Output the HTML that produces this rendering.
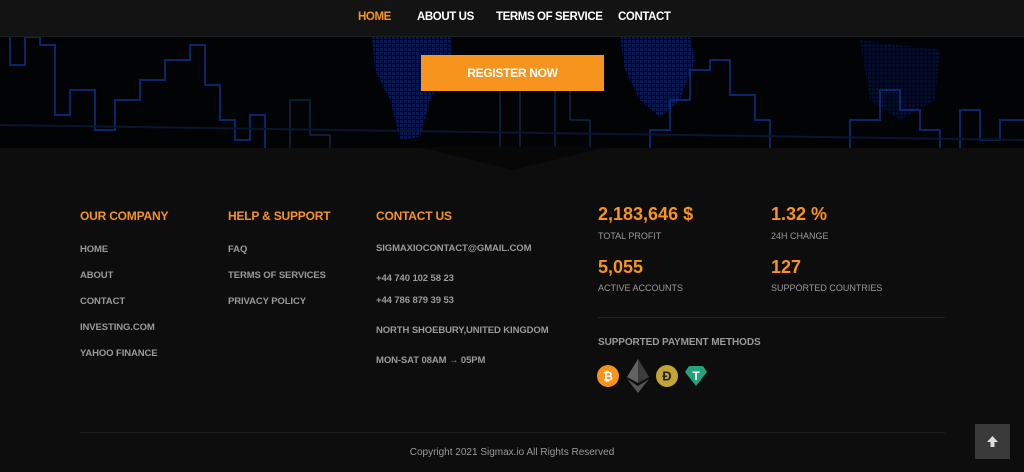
<!DOCTYPE html>
<html><head><meta charset="utf-8"><style>
*{margin:0;padding:0;box-sizing:border-box}
body{width:1024px;height:472px;background:#0d0d0d;font-family:"Liberation Sans",sans-serif;position:relative;overflow:hidden}
.nav{position:absolute;top:0;left:0;width:1024px;height:37px;background:#131313;border-bottom:1px solid #1c1c1c;z-index:3}
.nav a{position:absolute;top:11px;font-size:11.5px;font-weight:bold;color:#fff;text-decoration:none;letter-spacing:-0.4px;white-space:nowrap}
.hero{position:absolute;top:37px;left:0;width:1024px;height:111px;background:#020305;overflow:hidden}
.chev{position:absolute;top:147px;left:0}
.btn{position:absolute;left:421px;top:55px;width:183px;height:36px;background:#f7941d;color:#fff;font-size:12px;font-weight:bold;text-align:center;line-height:36px;z-index:2;letter-spacing:-0.3px}
.t{position:absolute;font-size:9.5px;font-weight:bold;color:#9a9a9a;white-space:nowrap;letter-spacing:-0.1px}
.h{position:absolute;font-size:12px;font-weight:bold;color:#f7941d;white-space:nowrap;letter-spacing:-0.2px}
.big{position:absolute;font-size:18px;font-weight:bold;color:#f7941d}
.s{position:absolute;font-size:9px;color:#9a9a9a;white-space:nowrap}
</style></head><body>
<div class="nav">
<a style="left:358px;color:#f7941d">HOME</a>
<a style="left:417px">ABOUT US</a>
<a style="left:496px">TERMS OF SERVICE</a>
<a style="left:618px">CONTACT</a>
</div>
<div class="hero">
<svg width="1024" height="111" viewBox="0 37 1024 111">
<defs><pattern id="d" width="4" height="4" patternUnits="userSpaceOnUse"><rect width="3" height="3" fill="#0b1f6e"/></pattern></defs>
<g fill="url(#d)" opacity="0.7">
<polygon points="372,37 452,37 450,70 430,100 420,137 400,140 390,100 375,70"/>
<polygon points="620,37 690,37 695,60 680,100 660,117 640,100 625,70"/>
<polygon points="860,40 940,50 935,100 900,120 870,100" opacity=".5"/>
</g>
<g fill="none" stroke="#0b2f85" stroke-width="2" opacity="0.8">
<polyline points="10,37 10,65 25,65 25,37 40,37 40,45 55,45 55,115 70,115 70,90 95,90 95,130 115,130 115,100 140,100 140,80 165,80 165,60 190,60 190,45 205,45 205,85 220,85 220,120 235,120 235,140 250,140 250,115 265,115 265,148"/>
<polyline points="650,148 650,130 670,130 670,100 690,100 690,70 710,70 710,60 730,60 730,95 755,95 755,120 770,120 770,148"/>
<polyline points="850,148 850,120 880,120 880,90 900,90 900,110 920,110 920,130 940,130 940,148"/>
<polyline points="960,148 960,110 980,110 980,140 1000,140 1000,120 1024,120"/>
</g>
<g fill="none" stroke="#12304f" stroke-width="1.5" opacity="0.8">
<polyline points="290,148 290,100 310,100 310,135 330,135 330,148"/>
<polyline points="500,148 500,70 520,70 520,148"/>
<polyline points="555,148 555,60 570,60 570,120 590,120 590,148"/>
</g>
<line x1="0" y1="125" x2="1024" y2="140" stroke="#0a1630" stroke-width="2"/>
</svg>
</div>
<svg class="chev" width="1024" height="25"><polygon points="418,0 608,0 513,23" fill="#070707"/></svg>
<div class="btn">REGISTER NOW</div>

<div class="h" style="left:80px;top:209px">OUR COMPANY</div>
<div class="h" style="left:228px;top:209px">HELP &amp; SUPPORT</div>
<div class="h" style="left:376px;top:209px">CONTACT US</div>
<div class="t" style="left:80px;top:244px">HOME</div>
<div class="t" style="left:80px;top:270px">ABOUT</div>
<div class="t" style="left:80px;top:296px">CONTACT</div>
<div class="t" style="left:80px;top:322px">INVESTING.COM</div>
<div class="t" style="left:80px;top:348px">YAHOO FINANCE</div>
<div class="t" style="left:228px;top:244px">FAQ</div>
<div class="t" style="left:228px;top:270px">TERMS OF SERVICES</div>
<div class="t" style="left:228px;top:296px">PRIVACY POLICY</div>
<div class="t" style="left:376px;top:243px">SIGMAXIOCONTACT@GMAIL.COM</div>
<div class="t" style="left:376px;top:273px">+44 740 102 58 23</div>
<div class="t" style="left:376px;top:295px">+44 786 879 39 53</div>
<div class="t" style="left:376px;top:325px">NORTH SHOEBURY,UNITED KINGDOM</div>
<div class="t" style="left:376px;top:355px">MON-SAT 08AM → 05PM</div>

<div class="big" style="left:598px;top:204px">2,183,646 $</div>
<div class="s" style="left:598px;top:231px">TOTAL PROFIT</div>
<div class="big" style="left:771px;top:204px">1.32 %</div>
<div class="s" style="left:771px;top:231px">24H CHANGE</div>
<div class="big" style="left:598px;top:257px">5,055</div>
<div class="s" style="left:598px;top:283px">ACTIVE ACCOUNTS</div>
<div class="big" style="left:771px;top:257px">127</div>
<div class="s" style="left:771px;top:283px">SUPPORTED COUNTRIES</div>
<div style="position:absolute;left:598px;top:317px;width:347px;height:1px;background:#222"></div>
<div class="t" style="left:598px;top:337px;font-size:10px">SUPPORTED PAYMENT METHODS</div>
<svg style="position:absolute;left:597px;top:358px" width="112" height="36">
<circle cx="11" cy="18" r="11" fill="#f7931a"/><text x="11" y="22.5" font-size="12" font-weight="bold" fill="#fff" text-anchor="middle" font-family="Liberation Sans">₿</text>
<polygon points="41,1 30,19 41,25 52,19" fill="#626262"/><polygon points="41,1 41,25 52,19" fill="#3c3c3c"/>
<polygon points="30,21 41,35 52,21 41,28" fill="#555"/>
<circle cx="70" cy="18" r="11" fill="#c2a633"/><text x="70" y="22.5" font-size="13" font-weight="bold" fill="#222" text-anchor="middle" font-family="Liberation Sans">Ð</text>
<polygon points="92,8 106,8 110,14 99,28 88,14" fill="#26a17b"/>
<text x="99" y="22" font-size="12" font-weight="bold" fill="#fff" text-anchor="middle" font-family="Liberation Sans">T</text>
</svg>

<div style="position:absolute;left:80px;top:432px;width:865px;height:1px;background:#1e1e1e"></div>
<div style="position:absolute;left:0;width:1024px;top:447px;text-align:center;font-size:10px;color:#9a9a9a">Copyright 2021 Sigmax.io All Rights Reserved</div>
<div style="position:absolute;left:975px;top:424px;width:35px;height:35px;background:#3a3a3a"></div>
<svg style="position:absolute;left:986px;top:435px" width="13" height="13"><polygon points="6.5,1 12,7 8.5,7 8.5,12 4.5,12 4.5,7 1,7" fill="#ddd"/></svg>
</body></html>
